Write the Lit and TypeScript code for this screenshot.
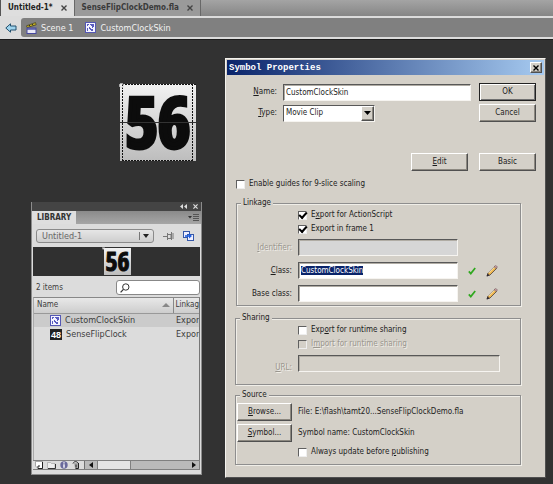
import { LitElement, html, css, svg } from "lit";
import { customElement } from "lit/decorators.js";

const symbolIcon = html`<svg class="ico" width="11" height="11" viewBox="0 0 11 11">
  <rect x="0.5" y="0.5" width="10" height="10" fill="#f4f4ff" stroke="#5558b4" />
  <path d="M2 2h2v1h-1v1h-1zM5 2h4v3h-1v1h-1v-2h-1v-1h-1zM4 5h1v1h1v1h2v2h-2v-1h-1v-1h-1zM2 6h1v3h-1z" fill="#5a5cc0" />
</svg>`;

const tick = html`<svg class="ico" width="8" height="8" viewBox="0 0 8 8">
  <path d="M0.8 4.4 L2.8 6.6 L7.2 1" fill="none" stroke="#2fa81e" stroke-width="1.7" />
</svg>`;

const pencil = html`<svg class="ico" width="12" height="12" viewBox="0 0 12 12">
  <path d="M1 11 L2 8 L8.5 1.5 L10.8 3.2 L4 10 Z" fill="#f0b850" stroke="#4a4038" stroke-width="0.8" />
  <path d="M2.5 8 L8.5 2" stroke="#fff3d8" stroke-width="1" />
  <path d="M8 1.8 L9.5 0.5 L11.5 1.8 L10.2 3.6 Z" fill="#c99aa0" stroke="#6b5a5a" stroke-width="0.5" />
  <path d="M0.6 11.4 L1.6 8.6 L3.6 10.3 Z" fill="#2a2430" />
</svg>`;

@customElement("app-root")
export class AppRoot extends LitElement {
  static styles = css`
    :host {
      display: block;
      position: relative;
      min-height: 100vh;
      overflow: hidden;
      background: #323232;
      font: 8px/12px "DejaVu Sans Condensed", "DejaVu Sans", sans-serif;
      color: #1c1c1c;
    }
    * { box-sizing: border-box; }
    button, input, select { font: inherit; color: inherit; margin: 0; padding: 0; border-radius: 0; }
    svg { display: block; flex: none; }

    /* document tabs */
    .tabs { display: flex; height: 16px; background: linear-gradient(#a4a4a4, #868686); border-left: 1px solid #555; }
    .tab { display: flex; align-items: center; gap: 8px; padding: 0 7px; background: #9a9a9a; border-right: 1px solid #686868; font-weight: 700; white-space: nowrap; color: #3a3a3a; }
    .tab.on { background: #dedede; color: #222; }
    .tab button { border: 0; background: none; width: 6px; height: 6px; }
    .path { display: flex; height: 24px; background: #dcdcdc; border-bottom: 1px solid #1c1c1c; padding: 2px 0 2px 5px; align-items: center; gap: 4px; }
    .crumbs { flex: 1; align-self: stretch; display: flex; align-items: center; gap: 12px; background: #808080; border-radius: 3px 0 0 3px; padding-left: 5px; color: #f2f2f2; font-size: 9px; }
    .crumb { display: flex; align-items: center; gap: 4px; color: inherit; text-decoration: none; }
    .back { border: 0; background: none; width: 12px; }

    /* stage */
    .clip { position: absolute; left: 120px; top: 84px; width: 76px; height: 77px; overflow: visible; }
    .digits { font-family: "Liberation Sans Narrow", "Open Sans Condensed", "Liberation Sans", sans-serif; font-weight: 700; fill: #0c0c0c; stroke: #0c0c0c; }

    /* library */
    .library { position: absolute; left: 31px; top: 202px; width: 171px; height: 273px; background: #dcdcdc; border: 1px solid #8c8c8c; border-top: 0; display: flex; flex-direction: column; font-size: 9px; color: #3c3c3c; }
    .grip { height: 9px; background: #444; display: flex; justify-content: flex-end; align-items: center; gap: 6px; padding-right: 3px; }
    .libtabs { display: flex; height: 13px; background: linear-gradient(#8a8a8a, #a6a6a6); justify-content: space-between; align-items: center; padding-right: 1px; }
    .libtab { background: #dedede; font-size: 8px; font-weight: 700; padding: 1px 5px 0; align-self: stretch; color: #333; }
    .librow { display: flex; align-items: center; padding: 5px 7px 4px 4px; gap: 9px; }
    .doc { position: relative; flex: 1; display: flex; }
    .doc select { appearance: none; width: 100%; height: 14px; border: 1px solid #8a8a8a; border-radius: 3px; background: linear-gradient(#e6e6e6, #cecece); padding: 0 5px; color: #666; }
    .doc svg { position: absolute; right: 3px; top: 2px; pointer-events: none; }
    .preview { height: 29px; margin: 0 1px; background: #303030; display: flex; justify-content: center; }
    .preview svg { overflow: visible; }
    .find { display: flex; align-items: center; justify-content: space-between; padding: 4px 1px 2px 4px; font-size: 8px; }
    .search { display: flex; align-items: center; width: 84px; height: 15px; background: #fff; border: 1px solid #888; border-radius: 3px; padding-left: 3px; }
    .search input { border: 0; outline: 0; width: 60px; background: none; }
    .list { flex: 1; margin: 0 1px; overflow: hidden; border-top: 1px solid #888; border-left: 1px solid #aaa; border-right: 1px solid #777; }
    table { border-collapse: collapse; table-layout: fixed; width: 100%; }
    th { height: 15px; padding: 0 3px; font-weight: 400; font-size: 8px; text-align: left; background: linear-gradient(#e8e8e8, #cdcdcd); border-bottom: 1px solid #999; overflow: hidden; white-space: nowrap; }
    th + th { width: 26px; border-left: 1px solid #888; padding: 0 0 0 2px; }
    td { height: 14px; padding: 0 0 0 16px; overflow: hidden; white-space: nowrap; }
    td + td { padding: 0 0 0 3px; }
    .picked { background: #cbcbcb; }
    .cell { display: flex; align-items: center; gap: 4px; }
    .sort { margin-left: auto; }
    .foot { display: flex; height: 10px; margin: 0 1px 4px; border: 1px solid #808080; border-left: 0; align-items: center; gap: 4px; padding-left: 2px; }
    .bar { flex: 1; height: 8px; background: #bababa; border-left: 1px solid #707070; display: flex; align-items: center; justify-content: space-between; padding-right: 3px; }
    .thumb { width: 34px; height: 8px; background: #e4e4e4; border: solid #808080; border-width: 0 1px; margin: 0 auto 0 4px; }
    .bar svg:first-child { margin-left: 4px; }

    /* dialog */
    .dialog { position: absolute; left: 225px; top: 58px; width: 321px; background: #d4d0c8; border: 1px solid #f4f2ee; border-right-color: #505050; border-bottom-color: #505050; padding: 1px 1px 12px; }
    .title { display: flex; height: 15px; align-items: center; justify-content: space-between; padding: 0 2px; background: linear-gradient(90deg, #0a246a, #a6caf0); color: #fff; font: 700 9px/12px "Liberation Mono", monospace; }
    .title h1 { font: inherit; margin: 0; }
    .btn { height: 18px; background: #d4d0c8; border: 1px solid; border-color: #fff #505050 #505050 #fff; box-shadow: inset -1px -1px #8c8880; text-align: center; padding: 0; }
    .btn.main { border-color: #222; box-shadow: inset 1px 1px #fff, inset -1px -1px #707070; }
    .btn.x { width: 12px; height: 11px; display: grid; place-items: center; }
    .text { height: 17px; background: #fff; border: 1px solid; border-color: #585858 #f6f4f0 #f6f4f0 #585858; box-shadow: inset 1px 1px #b0aca4; padding: 0 2px; width: 160px; outline: 0; }
    .text:disabled { background: #d4d0c8; }
    .text.grey { background: #d6d6d6; }
    .text::selection { background: #0a246a; color: #fff; }
    .top { display: grid; grid-template-columns: 50px 1fr 57px; column-gap: 6px; row-gap: 3px; padding: 8px 8px 0 0; align-items: center; }
    .top label { text-align: right; }
    .top .text { width: 188px; }
    .pick { position: relative; width: 92px; display: flex; }
    .pick select { appearance: none; width: 100%; height: 17px; padding: 0 2px; background: #fff; border: 1px solid; border-color: #585858 #f6f4f0 #f6f4f0 #585858; outline: 0; }
    .pick .btn { position: absolute; right: 1px; top: 1px; width: 13px; height: 15px; display: grid; place-items: center; pointer-events: none; }
    .acts { display: flex; justify-content: flex-end; gap: 11px; padding: 31px 8px 6px; }
    .acts .btn { width: 57px; }
    .tick { display: flex; align-items: center; gap: 4px; height: 14px; }
    .tick input { appearance: none; width: 9px; height: 9px; background: #fff; border: 1px solid; border-color: #606060 #eee #eee #606060; display: grid; place-items: center; }
    .tick input:checked::before { content: ""; width: 6px; height: 3px; border: solid #000; border-width: 0 0 2px 2px; transform: translateY(-1px) rotate(-48deg); }
    .tick input:disabled { background: #d4d0c8; }
    .wide { margin-left: 9px; }
    .off { color: #9a968e; text-shadow: 1px 1px #f0eee8; }
    fieldset { margin: 0 23px 0 8px; border: 1px solid #8e8e8e; box-shadow: inset 1px 1px #f0eee8, 1px 1px #f0eee8; padding: 0; min-width: 0; }
    legend { margin-left: 4px; padding: 0 2px; height: 10px; line-height: 10px; background: #d4d0c8; }
    .linkage { margin: 7px 23px 0 9px; }
    .form { display: grid; grid-template-columns: 56px 1fr; column-gap: 6px; align-items: center; }
    .form > label { text-align: right; }
    .form > .tick { grid-column: 2; text-align: left; }
    .linkage .form { grid-template-columns: 55px 1fr; }
    .line { display: flex; align-items: center; gap: 10px; height: 23px; }
    .form .url { width: 202px; margin: 4px 0 12px; }
    .sharing { margin-top: 7px; }
    .source { margin-top: 5px; }
    .source .form { grid-template-columns: 55px 1fr; padding: 3px 0 5px 1px; row-gap: 3px; }
    u { text-underline-offset: 1px; }
  `;

  firstUpdated() {
    const field = this.renderRoot.querySelector<HTMLInputElement>("#cls");
    field?.focus();
    field?.select();
  }

  private plate(id: string, w: number, h: number) {
    return svg`<defs><linearGradient id=${id} x2="0" y2="1"><stop stop-color="#f2f2f2" /><stop offset="1" stop-color="#bdbdbd" /></linearGradient></defs>
      <rect width=${w} height=${h} fill="url(#${id})" />`;
  }

  private close(color: string, size = 6) {
    return html`<svg width=${size} height=${size} viewBox="0 0 6 6"><path d="M0.5 0.5 L5.5 5.5 M5.5 0.5 L0.5 5.5" stroke=${color} stroke-width="1.4" /></svg>`;
  }

  render() {
    return html`
      <nav class="tabs">
        <div class="tab on">Untitled-1* <button aria-label="Close Untitled-1">${this.close("#444")}</button></div>
        <div class="tab">SenseFlipClockDemo.fla <button aria-label="Close demo">${this.close("#444")}</button></div>
      </nav>
      <nav class="path">
        <button class="back" aria-label="Back"><svg width="12" height="10" viewBox="0 0 12 10"><path d="M0.8 5 L5.5 0.8 V3 H11 V7 H5.5 V9.2 Z" fill="#9fd4ee" stroke="#23506e" /></svg></button>
        <div class="crumbs">
          <a class="crumb" href="#scene"><svg width="11" height="12" viewBox="0 0 11 12"><path d="M0.5 3.8 L9.5 0.6 L10.2 2.8 L1.2 5.6 Z" fill="#c8b422" stroke="#3c3a20" stroke-width="0.7" /><path d="M3 3 L4 4.4 M6 2 L7 3.4" stroke="#222" /><rect x="1" y="6" width="9" height="5.5" fill="#e8e8f6" stroke="#4648a0" /><path d="M1 7 H10" stroke="#4648a0" stroke-width="1.4" /></svg>Scene 1</a>
          <a class="crumb" href="#skin">${symbolIcon}CustomClockSkin</a>
        </div>
      </nav>

      <svg class="clip" viewBox="0 0 76 77">
        ${this.plate("g1", 76, 77)}
        <text class="digits" x="38" y="64" text-anchor="middle" font-size="70" stroke-width="4">56</text>
        <path d="M0 38.5 H76" stroke="#333" />
        <path d="M2 0.5 H76 M2 76.5 H73" stroke="#111" stroke-dasharray="2 1" />
        <path d="M2.5 0 V77 M72.5 0 V77" stroke="#111" stroke-dasharray="2 1" />
        <circle cx="1.5" cy="1.5" r="2" fill="none" stroke="#ddd" />
      </svg>

      <section class="library">
        <div class="grip">
          <svg width="7" height="5" viewBox="0 0 7 5"><path d="M3 0 L0 2.5 L3 5 Z M7 0 L4 2.5 L7 5 Z" fill="#ddd" /></svg>
          ${this.close("#ddd", 5)}
        </div>
        <div class="libtabs"><div class="libtab">LIBRARY</div>
          <svg width="12" height="7" viewBox="0 0 12 7"><path d="M0 2 H4 L2 4.5 Z" fill="#333" /><path d="M5 0.5 H11 M5 2.5 H11 M5 4.5 H11 M5 6.5 H11" stroke="#555" /></svg>
        </div>
        <div class="librow">
          <div class="doc"><select aria-label="Document"><option>Untitled-1</option></select>
            <svg width="12" height="10" viewBox="0 0 12 10"><path d="M0.5 1 V9" stroke="#777" /><path d="M4 3 H10 L7 7 Z" fill="#222" /></svg></div>
          <svg width="11" height="10" viewBox="0 0 11 10"><path d="M0 5.5 H4 M4.5 2 V9 M4.5 3.5 H8 V7.5 H4.5 M8.5 1 V9 M10 2 V8" fill="none" stroke="#777" /></svg>
          <svg width="11" height="10" viewBox="0 0 11 10"><rect x="0.5" y="0.5" width="6" height="6" fill="#eef" stroke="#3457a8" /><rect x="4.5" y="3.5" width="6" height="6" fill="#eef" stroke="#3457a8" /><path d="M2 5 H7" stroke="#1f5fe0" stroke-width="1.6" /><path d="M6 2.5 L9 5 L6 7.5 Z" fill="#1f5fe0" /></svg>
        </div>
        <div class="preview">
          <svg width="30" height="29" viewBox="0 0 30 29">
            <svg x="2" y="1" width="27" height="27">${this.plate("g2", 27, 27)}</svg>
            <text class="digits" x="15.5" y="24" text-anchor="middle" font-size="26" stroke-width="1">56</text>
            <path d="M0 0.5 H3 L1 3 Z" fill="#ddd" />
          </svg>
        </div>
        <div class="find"><span>2 items</span>
          <label class="search"><svg width="10" height="10" viewBox="0 0 10 10"><circle cx="5.8" cy="4" r="3.2" fill="none" stroke="#333" /><path d="M3.4 6.4 L0.6 9.4" stroke="#333" stroke-width="1.3" /></svg><input aria-label="Search" /></label>
        </div>
        <div class="list">
          <table>
            <thead><tr><th><div class="cell">Name <svg class="sort" width="8" height="4" viewBox="0 0 8 4"><path d="M0 4 L4 0 L8 4 Z" fill="#888" /></svg></div></th><th>Linkage</th></tr></thead>
            <tbody>
              <tr class="picked"><td><div class="cell">${symbolIcon}CustomClockSkin</div></td><td>Export</td></tr>
              <tr><td><div class="cell"><svg width="12" height="11" viewBox="0 0 12 11"><rect width="12" height="11" fill="#222" /><text x="6" y="9" text-anchor="middle" font-family="Liberation Sans" font-weight="700" font-size="9" fill="#fff">48</text></svg>SenseFlipClock</div></td><td>Export</td></tr>
            </tbody>
          </table>
        </div>
        <div class="foot">
          <svg width="8" height="8" viewBox="0 0 8 8"><path d="M0.5 0.5 H7.5 V7.5 H3 L0.5 5 Z" fill="#fff" stroke="#777" stroke-width="0.6" /><path d="M7.5 1 V7.5 H3 V5 H5" fill="none" stroke="#222" /></svg>
          <svg width="9" height="8" viewBox="0 0 9 8"><path d="M0.5 1.5 H3.5 L4.5 2.5 H8 V7.5 H0.5 Z" fill="#eee" stroke="#999" stroke-width="0.6" /><path d="M8.5 3 V7.5 H1" fill="none" stroke="#333" /></svg>
          <svg width="8" height="8" viewBox="0 0 8 8"><circle cx="4" cy="4" r="3.7" fill="#6a6a9c" /><path d="M4 1.2 V2.4 M4 3.2 V6.8" stroke="#fff" stroke-width="1.4" /></svg>
          <svg width="8" height="8" viewBox="0 0 8 8"><path d="M2 2 H6 V7.5 H3 Z" fill="#aaa" /><path d="M1 2.5 C2 0 5 0 6.5 2.5 M6.5 2 V7.5 H3.5 M4 3.5 V6.5" fill="none" stroke="#222" /></svg>
          <div class="bar">
            <svg width="4" height="6" viewBox="0 0 4 6"><path d="M4 0 V6 L0 3 Z" fill="#111" /></svg>
            <div class="thumb"></div>
            <svg width="4" height="6" viewBox="0 0 4 6"><path d="M0 0 V6 L4 3 Z" fill="#111" /></svg>
          </div>
        </div>
      </section>

      <section class="dialog" role="dialog" aria-labelledby="ttl">
        <header class="title"><h1 id="ttl">Symbol Properties</h1><button class="btn x" aria-label="Close">${this.close("#000")}</button></header>
        <div class="top">
          <label for="name"><u>N</u>ame:</label><input class="text" id="name" .value=${"CustomClockSkin"} /><button class="btn main">OK</button>
          <label for="type"><u>T</u>ype:</label><div class="pick"><select id="type"><option>Movie Clip</option></select><span class="btn"><svg width="7" height="4" viewBox="0 0 7 4"><path d="M0 0 H7 L3.5 4 Z" fill="#000" /></svg></span></div><button class="btn">Cancel</button>
        </div>
        <div class="acts"><button class="btn"><u>E</u>dit</button><button class="btn">Basic</button></div>
        <label class="tick wide"><input type="checkbox" />Enable guides for 9-slice scaling</label>
        <fieldset class="linkage"><legend>Linkage</legend>
          <div class="form">
            <label class="tick"><input type="checkbox" checked /><span>E<u>x</u>port for ActionScript</span></label>
            <label class="tick"><input type="checkbox" checked />Export in frame 1</label>
            <label class="off" for="ident"><u>I</u>dentifier:</label><div class="line"><input class="text grey" id="ident" disabled /></div>
            <label for="cls"><u>C</u>lass:</label><div class="line"><input class="text" id="cls" .value=${"CustomClockSkin"} />${tick}${pencil}</div>
            <label for="base">Base class:</label><div class="line"><input class="text" id="base" />${tick}${pencil}</div>
          </div>
        </fieldset>
        <fieldset class="sharing"><legend>Sharing</legend>
          <div class="form">
            <label class="tick"><input type="checkbox" /><span>Exp<u>o</u>rt for runtime sharing</span></label>
            <label class="tick off"><input type="checkbox" disabled /><span>I<u>m</u>port for runtime sharing</span></label>
            <label class="off" for="url"><u>U</u>RL:</label><input class="text url" id="url" disabled />
          </div>
        </fieldset>
        <fieldset class="source"><legend>Source</legend>
          <div class="form">
            <button class="btn"><u>B</u>rowse...</button><span>File: E:\\flash\\tamt20...SenseFlipClockDemo.fla</span>
            <button class="btn"><u>S</u>ymbol...</button><span>Symbol name: CustomClockSkin</span>
            <label class="tick"><input type="checkbox" /><span>Always update before <u>p</u>ublishing</span></label>
          </div>
        </fieldset>
      </section>
    `;
  }
}
